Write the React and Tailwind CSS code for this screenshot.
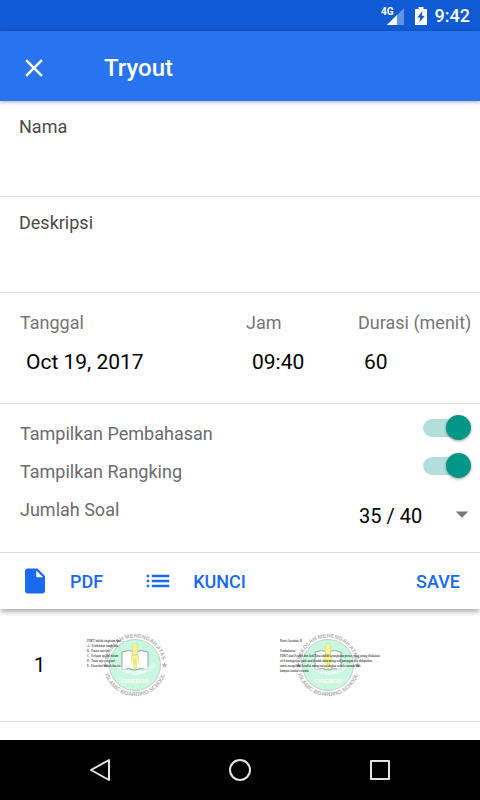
import React, { useId, useState } from 'react';
import { MdArrowDropDown, MdClose, MdInsertDriveFile, MdList } from 'react-icons/md';

const questions = [
    {
        no: 1,
        question: [
            'PDKT adalah singkatan dari ...',
            'A.  Pendekatan untuk kita',
            'B.  Pasien saat itu',
            'C.  Perlatan spesial dalam',
            'D.  Pusat saja yang asri',
            'E.  Pusat dari rumah dan itu',
        ],
        answer: [
            'Kunci Jawaban: B',
            '',
            'Pembahasan:',
            'PDKT atau Pendek dan Jadi Tahu adalah serangkaian proses yang jarang dilakukan',
            'oleh barangsiapa pada saat hendak akan mengenali pasangan dan didapatkan',
            'untuk mengetahui kondisi mengenai perangkat serta keturunan dan',
            'kampus wanita tersebut.',
        ],
    },
];

// --- STATUS BAR ---
const StatusBar = () => (
    <div className="h-[31px] bg-[#105bd3] text-white flex items-center justify-end pr-2.5">
        <svg width="24" height="20" viewBox="0 0 24 20" aria-hidden="true">
            <path d="M23 2v17H6z" fill="#fff" opacity="0.35" />
            <path d="M16 9v10H6z" fill="#fff" />
            <text x="0" y="9" fontSize="10" fontWeight="700" fontFamily="Roboto, sans-serif" fill="#fff">4G</text>
        </svg>
        <svg className="ml-2.5" width="12" height="18" viewBox="0 0 12 18" aria-hidden="true">
            <path d="M3.5 0h5v2H12v16H0V2h3.5z" fill="#fff" />
            <path d="M7.6 4 2.2 10.6h3L4.4 15.6l5.4-6.8h-3z" fill="#105bd3" />
        </svg>
        <span className="ml-2 text-[18px] leading-6 font-medium">9:42</span>
    </div>
);

// --- SCHOOL EMBLEM ---
const Emblem = () => {
    const id = useId();

    return (
        <svg width="66" height="66" viewBox="-33 -33 66 66" aria-hidden="true" fontFamily="Liberation Sans, sans-serif">
            <defs>
                <path id={`${id}top`} d="M-26.6 7A27.5 27.5 0 1 1 26.6 7" />
                <path id={`${id}bottom`} d="M-31.5-3A31.6 31.6 0 1 0 31.5-3" />
                <path id={`${id}band`} d="M-24-3Q0 23 24-3" />
            </defs>
            <circle r="25.5" fill="#c9f8e1" stroke="#c8cecb" strokeWidth="1" />
            <path d="M-13-13Q-6-16 0-13Q6-16 13-13V5Q6 2 0 5Q-6 2-13 5Z" fill="#fff" stroke="#93a19a" strokeWidth="1" />
            <path d="M0-13V4" stroke="#b9c4be" strokeWidth="0.8" />
            <path d="M-2.5-21h5v11l1 1v6l-2 2v4h-3v-4l-2-2v-6l1-1z" fill="#f7f493" stroke="#d8cf80" strokeWidth="0.5" />
            <path d="M-2.5-10h5M0-6v5" stroke="#cfc46c" strokeWidth="0.7" />
            <g fill="#b0b0b0" fontSize="5.5" fontWeight="700" textAnchor="middle">
                <text><textPath href={`#${id}top`} startOffset="50%">SEKOLAH MENENGAH ATAS</textPath></text>
                <text><textPath href={`#${id}bottom`} startOffset="50%">ISLAMIC BOARDING SCHOOL</textPath></text>
            </g>
            <g fill="#b0b0b0">
                <path d="M29.5-2.6l.8 1.8 1.9.2-1.4 1.3.4 1.9-1.7-1-1.7 1 .4-1.9-1.4-1.3 1.9-.2z" />
                <path d="M-29.5-2.6l.8 1.8 1.9.2-1.4 1.3.4 1.9-1.7-1-1.7 1 .4-1.9-1.4-1.3 1.9-.2z" />
            </g>
            <g fill="#fff" fontWeight="700" textAnchor="middle">
                <text fontSize="5"><textPath href={`#${id}band`} startOffset="50%">PINTAR KEMUNING</textPath></text>
                <text y="18" fontSize="6">CIREBON</text>
            </g>
        </svg>
    );
};

const Sheet = ({ lines }) => (
    <div className="relative">
        <Emblem />
        <div className="absolute top-[7px] -left-[15px] whitespace-pre">
            {lines.map((line, i) => (
                <p key={i} className="h-[5px]">{line}</p>
            ))}
        </div>
    </div>
);

const TextField = ({ id, label, value, onChange }) => (
    <div className="h-24 px-[19px] pt-3.5 border-b border-[#d9d9d9]">
        <label htmlFor={id} className="block text-[18px] leading-6 text-[#4a4a4a]">{label}</label>
        <input
            id={id} name={id} type="text" value={value} onChange={onChange}
            className="w-full h-12 text-xl text-black focus:outline-none"
        />
    </div>
);

const ValueField = ({ id, label, value, onChange }) => (
    <div>
        <label htmlFor={id} className="block text-[18px] leading-6 text-[#757575] whitespace-nowrap">{label}</label>
        <input
            id={id} name={id} type="text" value={value} onChange={onChange}
            className="w-full h-8 mt-[11px] pl-1.5 text-[21px] text-black focus:outline-none"
        />
    </div>
);

const SwitchRow = ({ id, label, checked, onChange }) => (
    <div className="h-[38px] flex items-start justify-between">
        <label htmlFor={id} className="pt-[7px] text-[18px] leading-6 text-[#6b6b6b]">{label}</label>
        <input
            id={id} name={id} type="checkbox" role="switch" checked={checked} onChange={onChange}
            className="relative appearance-none w-12 h-[25px] before:absolute before:left-0 before:top-1 before:w-10 before:h-[18px] before:rounded-full before:bg-gray-300 checked:before:bg-[#b2dfdb] after:absolute after:left-0 after:top-0 after:size-[25px] after:rounded-full after:bg-gray-50 after:shadow-[0_1px_3px_rgba(0,0,0,0.4)] checked:after:left-[23px] checked:after:bg-[#009688]"
        />
    </div>
);

const App = () => {
    const [formData, setFormData] = useState({
        nama: '',
        deskripsi: '',
        tanggal: 'Oct 19, 2017',
        jam: '09:40',
        durasi: '60',
        pembahasan: true,
        rangking: true,
        jumlah: '35',
    });

    const handleChange = (e) => {
        const { name, type, value, checked } = e.target;
        setFormData({ ...formData, [name]: type === 'checkbox' ? checked : value });
    };

    return (
        <div className="min-h-screen bg-white flex flex-col font-['Roboto',sans-serif]">
            <StatusBar />

            {/* App Bar */}
            <header className="relative z-10 h-[70px] bg-[#2874f0] text-white flex items-center pl-[19px] pt-1 shadow-[0_1px_4px_rgba(0,0,0,0.35)]">
                <button type="button" aria-label="Close">
                    <MdClose size={30} />
                </button>
                <h1 className="ml-[55px] text-2xl font-medium">Tryout</h1>
            </header>

            <form onSubmit={(e) => e.preventDefault()} className="shadow-[0_2px_6px_rgba(0,0,0,0.4)]">
                <TextField id="nama" label="Nama" value={formData.nama} onChange={handleChange} />
                <TextField id="deskripsi" label="Deskripsi" value={formData.deskripsi} onChange={handleChange} />

                {/* Schedule */}
                <div className="grid grid-cols-[1fr_112px_122px] pl-5 pt-[18px] pb-[25px] border-b border-[#d9d9d9]">
                    <ValueField id="tanggal" label="Tanggal" value={formData.tanggal} onChange={handleChange} />
                    <ValueField id="jam" label="Jam" value={formData.jam} onChange={handleChange} />
                    <ValueField id="durasi" label="Durasi (menit)" value={formData.durasi} onChange={handleChange} />
                </div>

                {/* Options */}
                <div className="pl-5 pr-[9px] pt-[11px] pb-[11px] border-b border-[#d9d9d9]">
                    <SwitchRow id="pembahasan" label="Tampilkan Pembahasan" checked={formData.pembahasan} onChange={handleChange} />
                    <SwitchRow id="rangking" label="Tampilkan Rangking" checked={formData.rangking} onChange={handleChange} />
                    <div className="flex items-start justify-between">
                        <label htmlFor="jumlah" className="pt-[7px] text-[18px] leading-6 text-[#6b6b6b]">Jumlah Soal</label>
                        <div className="relative">
                            <select
                                id="jumlah" name="jumlah" value={formData.jumlah} onChange={handleChange}
                                className="appearance-none w-28 h-[50px] text-xl text-black bg-transparent focus:outline-none"
                            >
                                <option value="35">35 / 40</option>
                                <option value="40">40 / 40</option>
                            </select>
                            <MdArrowDropDown size={30} className="absolute -right-1.5 top-2 text-[#757575] pointer-events-none" />
                        </div>
                    </div>
                </div>

                {/* Actions */}
                <div className="h-14 px-5 flex items-center text-[18px] font-medium text-[#1a69ee]">
                    <button type="button" className="flex items-center gap-5">
                        <MdInsertDriveFile size={30} />
                        PDF
                    </button>
                    <button type="button" className="ml-10 flex items-center gap-5">
                        <MdList size={30} />
                        KUNCI
                    </button>
                    <button type="submit" className="ml-auto">SAVE</button>
                </div>
            </form>

            {/* Questions */}
            <ul className="flex-1">
                {questions.map(({ no, question, answer }) => (
                    <li key={no} className="h-[113px] pl-[34px] flex items-center border-b border-[#d9d9d9]">
                        <span className="w-[68px] text-xl text-black">{no}</span>
                        <div className="flex-1 grid grid-cols-[193px_1fr] font-['Liberation_Serif',serif] text-[3px] leading-[5px] text-black">
                            <Sheet lines={question} />
                            <Sheet lines={answer} />
                        </div>
                    </li>
                ))}
            </ul>

            {/* Navigation Bar */}
            <nav className="h-15 px-[85px] bg-black text-[#e4e4e4] flex items-center justify-between">
                <button type="button" aria-label="Back">
                    <svg width="30" height="30" viewBox="0 0 30 30" fill="none" stroke="currentColor" strokeWidth="2" strokeLinejoin="round">
                        <path d="M24 5v20L6 15z" />
                    </svg>
                </button>
                <button type="button" aria-label="Home">
                    <svg width="30" height="30" viewBox="0 0 30 30" fill="none" stroke="currentColor" strokeWidth="2">
                        <circle cx="15" cy="15" r="10" />
                    </svg>
                </button>
                <button type="button" aria-label="Recent apps">
                    <svg width="30" height="30" viewBox="0 0 30 30" fill="none" stroke="currentColor" strokeWidth="2" strokeLinejoin="round">
                        <path d="M6 6h18v18H6z" />
                    </svg>
                </button>
            </nav>
        </div>
    );
};

export default App;
